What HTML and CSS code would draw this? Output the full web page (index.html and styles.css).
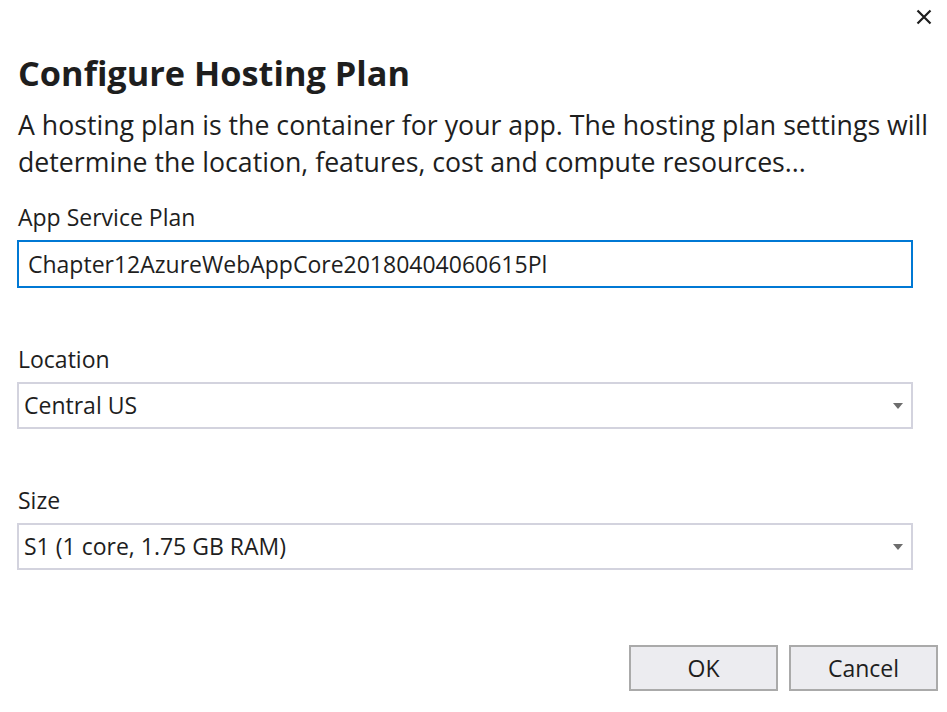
FILE: index.html
```html
<!DOCTYPE html>
<html lang="en">
<head>
<meta charset="utf-8">
<title>Configure Hosting Plan</title>
<link rel="stylesheet" href="styles.css">
</head>
<body>
<div class="dialog">
  <div class="topbar">
    <button class="close" aria-label="Close">
      <svg width="16" height="16" viewBox="0 0 16 16"><path d="M1.5 1.5 L14.5 14.5 M14.5 1.5 L1.5 14.5" stroke="#1e1e1e" stroke-width="2.2" fill="none"/></svg>
    </button>
  </div>
  <h1 class="title">Configure Hosting Plan</h1>
  <p class="desc">A hosting plan is the container for your app. The hosting plan settings will determine the location, features, cost and compute resources...</p>

  <div class="field field-first">
    <label class="label">App Service Plan</label>
    <div class="textbox">Chapter12AzureWebAppCore20180404060615Pl</div>
  </div>

  <div class="field">
    <label class="label">Location</label>
    <div class="select"><span>Central US</span><span class="arrow"></span></div>
  </div>

  <div class="field">
    <label class="label">Size</label>
    <div class="select"><span>S1 (1 core, 1.75 GB RAM)</span><span class="arrow"></span></div>
  </div>

  <div class="buttons">
    <button class="btn">OK</button>
    <button class="btn">Cancel</button>
  </div>
</div>
</body>
</html>
```

FILE: styles.css
```css
* { box-sizing: border-box; }
html, body { margin: 0; padding: 0; background: #ffffff; }
body {
  font-family: "Open Sans", "Noto Sans", sans-serif;
  color: #1e1e1e;
  width: 947px;
  height: 712px;
  overflow: hidden;
}
.dialog {
  padding-left: 17px;
  display: flex;
  flex-direction: column;
}
.topbar {
  display: flex;
  justify-content: flex-end;
  padding-right: 15px;
  padding-top: 9px;
  height: 33px;
}
.close {
  border: 0;
  background: transparent;
  padding: 0;
  width: 16px;
  height: 16px;
  display: block;
}
.close svg { display: block; }
.title {
  margin: 20px 0 0 1px;
  font-size: 34.3px;
  font-weight: 700;
  line-height: 40px;
  letter-spacing: 0;
}
.desc {
  margin: 13px 0 0 1px;
  font-size: 26.7px;
  line-height: 37px;
  width: 928px;
}
.field {
  display: flex;
  flex-direction: column;
  margin-right: 34px;
  margin-top: 56px;
}
.field-first { margin-top: 22px; }
.label {
  margin-left: 1px;
  font-size: 23px;
  line-height: 30px;
  margin-bottom: 8px;
}
.textbox {
  height: 48px;
  border: 2px solid #0078d4;
  padding: 0 9px;
  font-size: 23px;
  line-height: 44px;
  white-space: nowrap;
}
.select {
  height: 47px;
  border: 2px solid #d3d3de;
  padding: 0 8px 0 5px;
  font-size: 23px;
  line-height: 43px;
  display: flex;
  justify-content: space-between;
  align-items: center;
}
.arrow {
  width: 0;
  height: 0;
  border-left: 5px solid transparent;
  border-right: 5px solid transparent;
  border-top: 6px solid #6d6d6d;
}
.buttons {
  display: flex;
  justify-content: flex-end;
  gap: 11px;
  padding-right: 9px;
  margin-top: 75px;
}
.btn {
  width: 149px;
  height: 46px;
  background: #ececf0;
  border: 2px solid #aaaaaa;
  font-family: "Open Sans", "Noto Sans", sans-serif;
  font-size: 23px;
  color: #1e1e1e;
  padding: 0;
}
```
